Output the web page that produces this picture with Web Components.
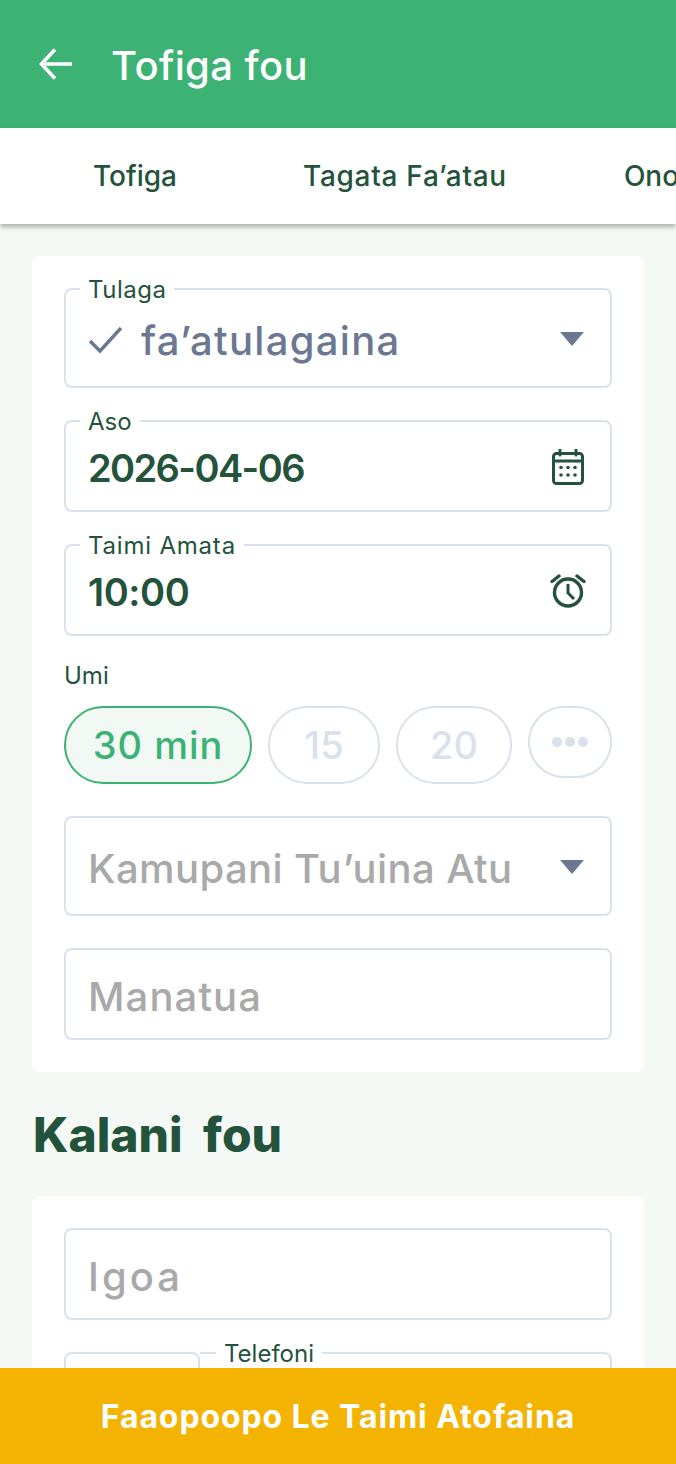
<!DOCTYPE html>
<html lang="sm">
<head>
<meta charset="UTF-8">
<meta name="viewport" content="width=device-width, initial-scale=1.0">
<title>Tofiga fou</title>
<style>
  html, body { margin: 0; height: 100%; }
  body {
    font-family: 'Inter', 'Liberation Sans', sans-serif;
    background-color: #f4f9f6;
    color: #24533c;
    overflow: hidden;
    height: 1464px;
    position: relative;
  }
</style>
</head>
<body>
  <app-header>Tofiga fou</app-header>
  <tab-bar></tab-bar>
  <main-area>
    <form-card>
      <form-field label="Tulaga" type="select" tall style="--lbl-ls:.5px">
        <svg slot="lead" width="36" height="32" viewBox="0 0 36 32"><path d="M2 17 L12 27 L33 4" fill="none" stroke="#6b7891" stroke-width="3.4"/></svg>
        <span style="color:#6b7891;font-size:40px;letter-spacing:1.3px">fa’atulagaina</span>
      </form-field>
      <form-field label="Aso" type="date" strong style="--val-ls:-1.6px">2026-04-06</form-field>
      <form-field label="Taimi Amata" type="time" strong style="--lbl-ls:.8px;--val-ls:-.4px">10:00</form-field>
      <chip-row label="Umi"></chip-row>
      <form-field type="select" placeholder tall style="--val-size:40px;--val-ls:.4px">Kamupani Tu’uina Atu</form-field>
      <form-field placeholder style="--val-size:40px;--val-ls:1.1px">Manatua</form-field>
    </form-card>
    <section-title>Kalani fou</section-title>
    <form-card>
      <form-field placeholder style="--val-size:40px;--val-ls:3px">Igoa</form-field>
      <phone-row></phone-row>
    </form-card>
  </main-area>
  <footer-button>Faaopoopo Le Taimi Atofaina</footer-button>

  <script>
    class AppHeader extends HTMLElement {
      constructor() {
        super();
        this.attachShadow({ mode: 'open' }).innerHTML = `
          <style>
            :host { display: flex; align-items: center; height: 128px; background: #3cb274; color: #fff; box-sizing: border-box; padding-left: 36px; }
            svg { width: 40px; height: 40px; margin-right: 35px; }
            span { font-size: 40px; font-weight: 500; letter-spacing: .4px; line-height: 48px; padding-top: 4px; }
          </style>
          <svg viewBox="0 0 40 40"><path d="M36 20 H7 M19 5.5 L5.5 20 L19 34.5" fill="none" stroke="#fff" stroke-width="3.6"/></svg>
          <span><slot></slot></span>`;
      }
    }

    class TabBar extends HTMLElement {
      constructor() {
        super();
        this.attachShadow({ mode: 'open' }).innerHTML = `
          <style>
            :host { display: flex; height: 96px; background: #fff; align-items: center; overflow: hidden; white-space: nowrap; box-shadow: 0 3px 5px rgba(0,0,0,.3); position: relative; font-size: 28px; font-weight: 500; color: #24533c; }
            span:nth-of-type(1) { margin-left: 93px; }
            span:nth-of-type(2) { margin-left: 126px; letter-spacing: .7px; }
            span:nth-of-type(3) { margin-left: 117px; }
          </style>
          <span>Tofiga</span><span>Tagata Fa’atau</span><span>Onoono</span>`;
      }
    }

    class MainArea extends HTMLElement {
      constructor() {
        super();
        this.attachShadow({ mode: 'open' }).innerHTML = `
          <style>:host { display: block; padding: 32px 32px 0; }</style>
          <slot></slot>`;
      }
    }

    class FormCard extends HTMLElement {
      constructor() {
        super();
        this.attachShadow({ mode: 'open' }).innerHTML = `
          <style>:host { display: flex; flex-direction: column; gap: 32px; background: #fff; border-radius: 8px; padding: 32px; }</style>
          <slot></slot>`;
      }
    }

    class SectionTitle extends HTMLElement {
      constructor() {
        super();
        this.attachShadow({ mode: 'open' }).innerHTML = `
          <style>:host { display: block; height: 124px; line-height: 126px; font-size: 48px; font-weight: 800; word-spacing: 10px; color: #24533c; padding-left: 1px; }</style>
          <slot></slot>`;
      }
    }

    const ICONS = {
      select: `<svg width="24" height="14" viewBox="0 0 24 14"><path d="M0 0 H24 L12 14 Z" fill="#6b7891"/></svg>`,
      date: `<svg width="32" height="36" viewBox="0 0 32 36"><path d="M8 1 V6 M24 1 V6" stroke="#24533c" stroke-width="3" stroke-linecap="round"/><rect x="1.5" y="4.5" width="29" height="30" rx="3" fill="none" stroke="#24533c" stroke-width="3"/><path d="M2 12 H30" stroke="#24533c" stroke-width="3"/><g fill="#24533c"><circle cx="9" cy="18.5" r="1.8"/><circle cx="16" cy="18.5" r="1.8"/><circle cx="23" cy="18.5" r="1.8"/><circle cx="9" cy="26" r="1.8"/><circle cx="16" cy="26" r="1.8"/><circle cx="23" cy="26" r="1.8"/></g></svg>`,
      time: `<svg width="36" height="34" viewBox="0 0 36 34" style="margin-right:-2px"><circle cx="18" cy="18.5" r="13.5" fill="none" stroke="#24533c" stroke-width="3.4"/><path d="M18 10 V19 L24 25" fill="none" stroke="#24533c" stroke-width="3"/><path d="M2 7.5 L9 2 M34 7.5 L27 2" stroke="#24533c" stroke-width="3.4" stroke-linecap="round"/></svg>`
    };

    class FormField extends HTMLElement {
      constructor() {
        super();
        const label = this.getAttribute('label');
        const type = this.getAttribute('type');
        this.attachShadow({ mode: 'open' }).innerHTML = `
          <style>
            :host { display: flex; align-items: center; position: relative; box-sizing: border-box; height: 92px; border: 2px solid #d9e1ec; border-radius: 8px; padding: 2px 26px 0 22px; font-size: var(--val-size, 38px); letter-spacing: var(--val-ls, 0); font-weight: 500; color: #24533c; }
            :host([tall]) { height: 100px; }
            :host([strong]) { font-weight: 600; }
            :host([placeholder]) { color: #a9a9a9; }
            .lbl { position: absolute; left: 14px; top: -14px; padding: 0 8px; background: #fff; font-size: 24px; line-height: 28px; font-weight: 400; letter-spacing: var(--lbl-ls, 0); color: #24533c; }
            .val { flex: 1; display: flex; align-items: center; gap: 17px; white-space: nowrap; padding-top: 2px; }
            .end { display: flex; }
            ::slotted(svg) { flex: none; }
          </style>
          ${label ? `<span class="lbl">${label}</span>` : ''}
          <div class="val"><slot name="lead"></slot><span><slot></slot></span></div>
          ${type ? `<div class="end">${ICONS[type]}</div>` : ''}`;
      }
    }

    class ChipRow extends HTMLElement {
      constructor() {
        super();
        this.attachShadow({ mode: 'open' }).innerHTML = `
          <style>
            :host { display: block; margin-top: -6px; }
            .lbl { font-size: 24px; line-height: 28px; color: #24533c; margin-bottom: 16px; }
            .row { display: flex; justify-content: space-between; align-items: flex-start; }
            .chip { box-sizing: border-box; height: 78px; display: flex; align-items: center; justify-content: center; border: 2px solid #d9e1ec; border-radius: 39px; font-size: 38px; font-weight: 500; color: #d9e1ec; }
            .on { width: 188px; border-color: #3cb274; background: #f2f9f5; color: #3cb274; letter-spacing: 1px; }
            .a { width: 112px; }
            .b { width: 116px; }
            .more { width: 84px; height: 72px; gap: 3px; }
            .more i { width: 10px; height: 10px; border-radius: 50%; background: #d9e1ec; }
          </style>
          <div class="lbl">${this.getAttribute('label')}</div>
          <div class="row">
            <div class="chip on">30 min</div>
            <div class="chip a">15</div>
            <div class="chip b">20</div>
            <div class="chip more"><i></i><i></i><i></i></div>
          </div>`;
      }
    }

    class PhoneRow extends HTMLElement {
      constructor() {
        super();
        this.attachShadow({ mode: 'open' }).innerHTML = `
          <style>
            :host { display: flex; height: 92px; }
            div { box-sizing: border-box; border: 2px solid #d9e1ec; border-radius: 8px; position: relative; }
            .code { width: 136px; }
            .num { flex: 1; border-left: none; border-radius: 0 8px 8px 0; }
            .lbl { position: absolute; left: 16px; top: -14px; padding: 0 8px; background: #fff; font-size: 24px; line-height: 28px; color: #24533c; }
          </style>
          <div class="code"></div>
          <div class="num"><span class="lbl">Telefoni</span></div>`;
      }
    }

    class FooterButton extends HTMLElement {
      constructor() {
        super();
        this.attachShadow({ mode: 'open' }).innerHTML = `
          <style>
            :host { position: absolute; left: 0; right: 0; bottom: 0; height: 96px; background: #f5b301; color: #fff; display: flex; align-items: center; justify-content: center; font-size: 32px; font-weight: 700; letter-spacing: .9px; }
          </style>
          <slot></slot>`;
      }
    }

    customElements.define('app-header', AppHeader);
    customElements.define('tab-bar', TabBar);
    customElements.define('main-area', MainArea);
    customElements.define('form-card', FormCard);
    customElements.define('section-title', SectionTitle);
    customElements.define('form-field', FormField);
    customElements.define('chip-row', ChipRow);
    customElements.define('phone-row', PhoneRow);
    customElements.define('footer-button', FooterButton);
  </script>
</body>
</html>
